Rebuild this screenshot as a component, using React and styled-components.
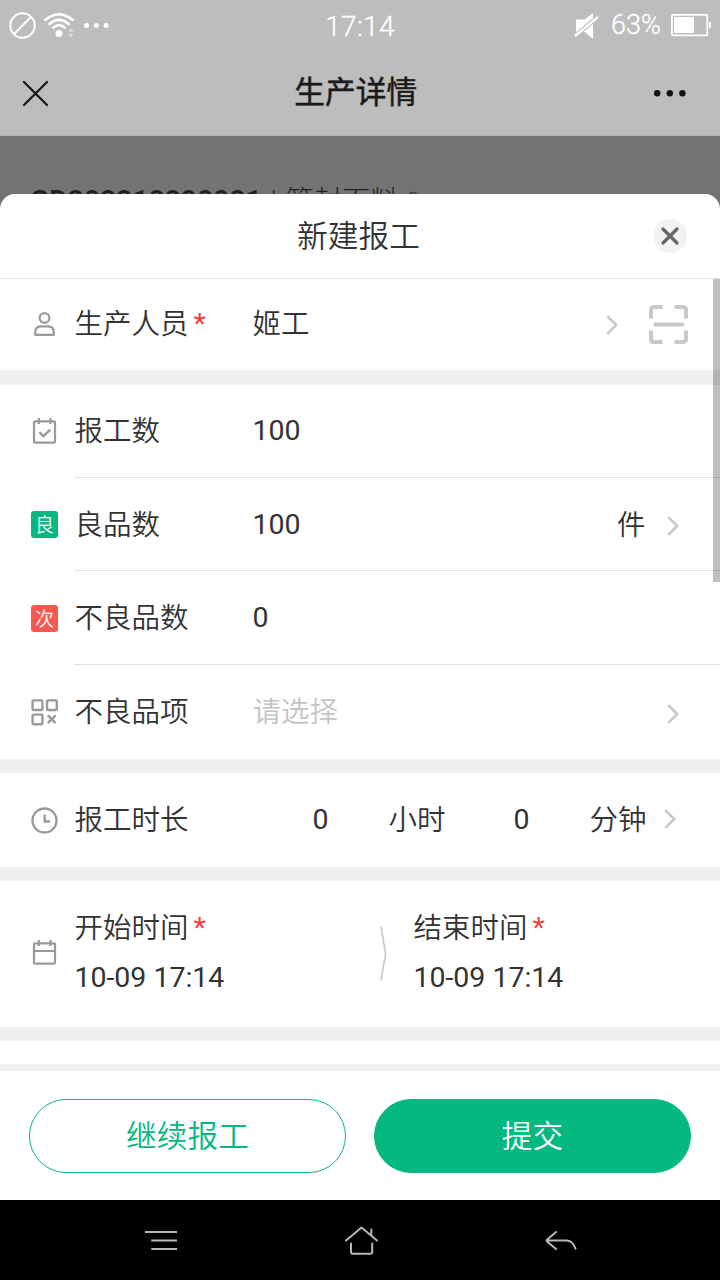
import React from 'react';
import styled, { createGlobalStyle } from 'styled-components';

const GlobalStyle = createGlobalStyle`
    * {
        box-sizing: border-box;
    }
    body {
        margin: 0;
        background: #000;
        font-family: Roboto, "Noto Sans CJK SC", sans-serif;
        color: #333;
    }
    svg {
        display: block;
        flex: none;
        fill: none;
        overflow: visible;
    }
    button {
        font-family: inherit;
        padding: 0;
    }
`

const Screen = styled.div`
    width: 720px;
    height: 1280px;
    display: flex;
    flex-direction: column;
    overflow: hidden;
`

const StatusBar = styled.div`
    height: 50px;
    flex: none;
    background: #bdbdbd;
    color: #fff;
    display: grid;
    grid-template-columns: 1fr auto 1fr;
    align-items: center;
    padding: 0 9px;
`

const StatusGroup = styled.div`
    display: flex;
    align-items: center;
    justify-content: ${props => props.$end ? 'flex-end' : 'flex-start'};
    gap: 9px;
`

const StatusTime = styled.span`
    font-size: 28px;
    font-weight: 300;
    line-height: 32px;
    letter-spacing: .3px;
    padding-top: 4px;
    -webkit-text-stroke: .3px;
`

const Battery = styled.span`
    font-size: 27px;
    font-weight: 300;
    line-height: 32px;
    padding: 0 1px 0 3px;
    -webkit-text-stroke: .3px;
`

const NavBar = styled.header`
    height: 86px;
    flex: none;
    background: #bdbdbd;
    border-bottom: 1px solid #b4b4b4;
    display: flex;
    align-items: center;
    justify-content: space-between;
    padding: 1px 34px 0 23px;
`

const NavTitle = styled.h1`
    margin: 0;
    padding: 0 0 0 9px;
    color: #1a1a1a;
    font-size: 30.7px;
    font-weight: 400;
    line-height: 40px;
    -webkit-text-stroke: .5px;
`

const Page = styled.main`
    position: relative;
    flex: 1;
    background: #737373;
`

const OrderLine = styled.div`
    display: flex;
    align-items: center;
    gap: 9px;
    padding: 45px 30px 0;
    line-height: 36px;
    font-size: 28.2px;
    font-weight: 300;
    color: #222;

    b {
        font-weight: 700;
    }
`

const Material = styled.span`
    padding-top: 3px;
`

const Sheet = styled.section`
    position: absolute;
    top: 58px;
    left: 0;
    right: 0;
    bottom: 0;
    display: flex;
    flex-direction: column;
    background: #fff;
    border-radius: 15px 15px 0 0;
`

const SheetHeader = styled.div`
    height: 85px;
    flex: none;
    display: grid;
    grid-template-columns: 1fr auto 1fr;
    align-items: center;
    padding: 0 33px 0 30px;
    border-bottom: 1px solid #e2e2e2;
`

const SheetTitle = styled.h2`
    margin: 0;
    grid-column: 2;
    padding-top: 2px;
    font-size: 30.7px;
    font-weight: 350;
    line-height: 40px;
`

const CloseButton = styled.button`
    justify-self: end;
    width: 34px;
    height: 34px;
    border: 0;
    border-radius: 50%;
    background: #f2f2f2;
    display: flex;
    align-items: center;
    justify-content: center;
`

const Form = styled.div`
    position: relative;
    flex: 1;
    background: #f0f0f0;
    display: flex;
    flex-direction: column;
`

const ScrollThumb = styled.div`
    position: absolute;
    top: 0;
    right: 0;
    width: 7px;
    height: 303px;
    background: rgba(0, 0, 0, .25);
`

const Group = styled.div`
    background: #fff;
    flex: none;
    margin-bottom: ${props => props.$gap || 14}px;
`

const Row = styled.div`
    display: flex;
    align-items: center;
    height: ${props => props.$height}px;
    padding-left: 31px;
    padding-bottom: ${props => props.$bottom || 0}px;
`

const IconCell = styled.div`
    width: 27px;
    margin-right: 16.4px;
    padding-bottom: ${props => props.$up || 0}px;
    display: flex;
    justify-content: center;
    flex: none;
`

const Cell = styled.div`
    flex: 1;
    height: 100%;
    display: flex;
    align-items: center;
    padding: ${props => props.$top || 0}px ${props => props.$right || 41.5}px ${props => props.$bottom || 0}px 0;
    border-bottom: ${props => props.$line ? '1px solid #e2e2e2' : '0'};
`

const Label = styled.label`
    width: 178px;
    flex: none;
    padding-top: 2px;
    font-size: 28.5px;
    font-weight: 350;
    line-height: 40px;
    white-space: nowrap;
`

const Required = styled.span`
    color: #f43d3d;
    font-weight: 400;
    line-height: 1;
    margin-left: 5px;
    vertical-align: 1px;
`

const Value = styled.span`
    flex: 1;
    padding-top: ${props => props.$han ? 2 : 0}px;
    font-size: 28.5px;
    font-weight: ${props => props.$han ? 350 : 400};
    line-height: 40px;
    color: ${props => props.$muted ? '#c4c4c4' : 'inherit'};
`

const Unit = styled.span`
    padding-top: 2px;
    font-size: 28.5px;
    font-weight: 350;
    line-height: 40px;
    margin-right: 21px;
`

const Tag = styled.span`
    width: 27px;
    height: 27px;
    border-radius: 3px;
    background: ${props => props.$color};
    color: #fff;
    font-size: 19px;
    font-weight: 350;
    line-height: 29px;
    text-align: center;
`

const Arrow = styled.span`
    margin-top: ${props => props.$down || 0}px;
    margin-right: ${props => props.$after || 0}px;
`

const Duration = styled.div`
    flex: 1;
    display: grid;
    grid-template-columns: 76px 125px 76px auto;
    padding-left: 60px;
    font-size: 28.5px;
    line-height: 40px;
`

const DurationUnit = styled.span`
    padding-top: 1px;
    font-weight: 350;
`

const TimeBlock = styled.div`
    width: ${props => props.$width || 'auto'};
    margin-left: ${props => props.$left || 0}px;
    display: flex;
    flex-direction: column;
    gap: 9px;
    font-size: 28.5px;
    line-height: 40px;
`

const TimeName = styled.span`
    font-weight: 350;
`

const Footer = styled.footer`
    height: 129px;
    flex: none;
    background: #fff;
    display: flex;
    gap: 28px;
    padding: 28px 29px 0;
`

const Button = styled.button`
    flex: 1;
    height: 74px;
    padding-top: 2px;
    border: 1px solid #05b880;
    border-radius: 37px;
    background: ${props => props.$primary ? '#05b880' : '#fff'};
    color: ${props => props.$primary ? '#fff' : '#05b880'};
    font-size: 30.7px;
    font-weight: 350;
    line-height: 40px;
`

const SystemBar = styled.nav`
    height: 80px;
    flex: none;
    background: #000;
    display: flex;
    align-items: center;
    justify-content: space-between;
    padding: 1px 143px 0 145px;
`

const BlockedIcon = () => (
    <svg width="27" height="27" stroke="#fff" strokeWidth="2">
        <circle cx="13.5" cy="13.5" r="12.2"/>
        <path d="M5.5 21.5L21.7 5.2"/>
    </svg>
)

const WifiIcon = () => (
    <svg width="30" height="27" stroke="#fff" strokeWidth="2.6">
        <path d="M-.5 8.6Q14 -4 28.5 8.6M3.5 12.6Q14 3 24.5 12.6M7.5 16.4Q14 10 20.7 16.4"/>
        <circle cx="14" cy="21.5" r="3.5" fill="#fff" stroke="none"/>
        <path d="M23.5 19.5l2.5-3 2.5 3zM23.5 22.2l2.5 3 2.5-3z" fill="#e4e4e4" stroke="none"/>
    </svg>
)

const DotsIcon = ({ r, gap, color }) => (
    <svg width={gap * 2 + r * 2} height={r * 2} style={{ fill: color }}>
        {[0, 1, 2].map(i => <circle key={i} cx={r + gap * i} cy={r} r={r}/>)}
    </svg>
)

const MuteIcon = () => (
    <svg width="25" height="27">
        <path d="M2 7.5h8.5L19 1v26l-8-7H2z" fill="#fff"/>
        <path d="M1 24L24 5" stroke="#bdbdbd" strokeWidth="4.6"/>
        <path d="M1 24L24 5" stroke="#fff" strokeWidth="2.4"/>
    </svg>
)

const BatteryIcon = () => (
    <svg width="40" height="22">
        <rect x=".9" y=".9" width="35.4" height="20.4" rx="1" stroke="#fff" strokeWidth="1.8"/>
        <path d="M3 3h20v16H3zM38 8h2v6h-2z" fill="#fff"/>
    </svg>
)

const CrossIcon = ({ size, color, weight }) => (
    <svg width={size} height={size} viewBox={`0 0 ${size} ${size}`} stroke={color} strokeWidth={weight} strokeLinecap="round">
        <path d={`M1 1L${size - 1} ${size - 1}M${size - 1} 1L1 ${size - 1}`}/>
    </svg>
)

const Chevron = () => (
    <svg width="12" height="20" stroke="#c8c8c8" strokeWidth="2.6">
        <path d="M1.3 1.2L10.2 10 1.3 18.8"/>
    </svg>
)

const ScanIcon = () => (
    <svg width="39" height="39" stroke="#c8c8c8" strokeWidth="4">
        <path d="M2 13.5V5q0-3 3-3h8.5M25.5 2H34q3 0 3 3v8.5M37 25.5V34q0 3-3 3h-8.5M13.5 37H5q-3 0-3-3v-8.5"/>
        <path d="M6.3 19.5h27" strokeLinecap="round"/>
    </svg>
)

const PersonIcon = () => (
    <svg width="21" height="24" stroke="#999" strokeWidth="2.2">
        <circle cx="10.5" cy="6" r="4.9"/>
        <path d="M1.2 22.8V20.5Q1.2 14.4 7.2 14.4h6.6q6 0 6 6.1v2.3z" strokeLinejoin="round"/>
    </svg>
)

const CheckCalendarIcon = () => (
    <svg width="23" height="26" stroke="#999" strokeWidth="2.2">
        <rect x="1" y="3.3" width="21" height="21.4" rx="1"/>
        <path d="M5.8 0v6M17.5 0v6"/>
        <path d="M6.3 14.2l4.2 4 6.8-6.6" strokeWidth="2.3"/>
    </svg>
)

const CalendarIcon = () => (
    <svg width="23" height="25" stroke="#999" strokeWidth="2.2">
        <rect x="1" y="3.3" width="21" height="20.4" rx="1"/>
        <path d="M5.8 0v6M17.5 0v6M1 11h21"/>
    </svg>
)

const GridIcon = () => (
    <svg width="27" height="27" stroke="#999" strokeWidth="2.4">
        <rect x="1.6" y="1.4" width="9.8" height="9.6" rx="1"/>
        <rect x="16" y="1.4" width="9.8" height="9.6" rx="1"/>
        <rect x="1.6" y="15.6" width="9.8" height="9.6" rx="1"/>
        <path d="M16.8 16.4l7.8 7.8M24.6 16.4l-7.8 7.8"/>
    </svg>
)

const ClockIcon = () => (
    <svg width="27" height="27" stroke="#999" strokeWidth="2.3">
        <circle cx="13.5" cy="13.5" r="12"/>
        <path d="M13.7 7.5v7H19"/>
    </svg>
)

const RangeDivider = () => (
    <svg width="8" height="55" stroke="#c8c8c8" strokeWidth="1.6">
        <path d="M1 .5L5.6 27.5 1 54.5"/>
    </svg>
)

const MenuIcon = () => (
    <svg width="32" height="21" stroke="#b8b8b8" strokeWidth="2">
        <path d="M0 2h32M6.3 10.5h25.7M6.3 19h25.7"/>
    </svg>
)

const HomeIcon = () => (
    <svg width="33" height="29" stroke="#b8b8b8" strokeWidth="2" strokeLinecap="round" strokeLinejoin="round">
        <path d="M1 14.5L16.5 1.5 32 14.5M26.3 3.5v5.5"/>
        <path d="M6 17.5V26q0 1.8 1.8 1.8h17.6q1.8 0 1.8-1.8v-8.5"/>
    </svg>
)

const BackIcon = () => (
    <svg width="32" height="20" stroke="#b8b8b8" strokeWidth="2" strokeLinecap="round" strokeLinejoin="round">
        <path d="M11 1L2 8.8q-.8.8 0 1.6L11 18M2 9.6h19.5q6 0 9 8"/>
    </svg>
)

export default () => (
    <Screen>
        <GlobalStyle/>
        <StatusBar>
            <StatusGroup>
                <BlockedIcon/>
                <WifiIcon/>
                <DotsIcon r={2.5} gap={9.8} color="#fff"/>
            </StatusGroup>
            <StatusTime>17:14</StatusTime>
            <StatusGroup $end>
                <MuteIcon/>
                <Battery>63%</Battery>
                <BatteryIcon/>
            </StatusGroup>
        </StatusBar>
        <NavBar>
            <CrossIcon size={25} color="#1a1a1a" weight={2.3}/>
            <NavTitle>生产详情</NavTitle>
            <DotsIcon r={3.2} gap={12.6} color="#111"/>
        </NavBar>
        <Page>
            <OrderLine>
                <b>GD202210090001</b>
                <span>|</span>
                <Material>管封面料</Material>
                <svg width="14" height="14" stroke="#444" strokeWidth="1.5"><circle cx="5" cy="4.5" r="6"/></svg>
            </OrderLine>
            <Sheet>
                <SheetHeader>
                    <SheetTitle>新建报工</SheetTitle>
                    <CloseButton aria-label="关闭">
                        <CrossIcon size={16} color="#666" weight={3.2}/>
                    </CloseButton>
                </SheetHeader>
                <Form>
                    <Group $gap={15}>
                        <Row $height={91}>
                            <IconCell $up={2}><PersonIcon/></IconCell>
                            <Cell $right={32.5} $bottom={1}>
                                <Label>生产人员<Required>*</Required></Label>
                                <Value $han>姬工</Value>
                                <Arrow $down={2} $after={30.5}><Chevron/></Arrow>
                                <ScanIcon/>
                            </Cell>
                        </Row>
                    </Group>
                    <Group>
                        <Row $height={93}>
                            <IconCell $up={2}><CheckCalendarIcon/></IconCell>
                            <Cell $line>
                                <Label>报工数</Label>
                                <Value>100</Value>
                            </Cell>
                        </Row>
                        <Row $height={93}>
                            <IconCell><Tag $color="#05b880">良</Tag></IconCell>
                            <Cell $line $top={2}>
                                <Label>良品数</Label>
                                <Value>100</Value>
                                <Unit>件</Unit>
                                <Arrow $down={2}><Chevron/></Arrow>
                            </Cell>
                        </Row>
                        <Row $height={94}>
                            <IconCell><Tag $color="#fa5751">次</Tag></IconCell>
                            <Cell $line>
                                <Label>不良品数</Label>
                                <Value>0</Value>
                            </Cell>
                        </Row>
                        <Row $height={94}>
                            <IconCell><GridIcon/></IconCell>
                            <Cell>
                                <Label>不良品项</Label>
                                <Value $han $muted>请选择</Value>
                                <Arrow $down={3}><Chevron/></Arrow>
                            </Cell>
                        </Row>
                    </Group>
                    <Group>
                        <Row $height={94}>
                            <IconCell><ClockIcon/></IconCell>
                            <Cell $right={44.5}>
                                <Label>报工时长</Label>
                                <Duration>
                                    <span>0</span>
                                    <DurationUnit>小时</DurationUnit>
                                    <span>0</span>
                                    <DurationUnit>分钟</DurationUnit>
                                </Duration>
                                <Arrow $down={-2}><Chevron/></Arrow>
                            </Cell>
                        </Row>
                    </Group>
                    <Group>
                        <Row $height={146} $bottom={2}>
                            <IconCell $up={1}><CalendarIcon/></IconCell>
                            <TimeBlock $width="305.5px">
                                <TimeName>开始时间<Required>*</Required></TimeName>
                                <span>10-09 17:14</span>
                            </TimeBlock>
                            <RangeDivider/>
                            <TimeBlock $left={25.5}>
                                <TimeName>结束时间<Required>*</Required></TimeName>
                                <span>10-09 17:14</span>
                            </TimeBlock>
                        </Row>
                    </Group>
                    <Group $gap={7}>
                        <Row $height={23}/>
                    </Group>
                    <ScrollThumb/>
                </Form>
                <Footer>
                    <Button>继续报工</Button>
                    <Button $primary>提交</Button>
                </Footer>
            </Sheet>
        </Page>
        <SystemBar>
            <MenuIcon/>
            <HomeIcon/>
            <BackIcon/>
        </SystemBar>
    </Screen>
)
